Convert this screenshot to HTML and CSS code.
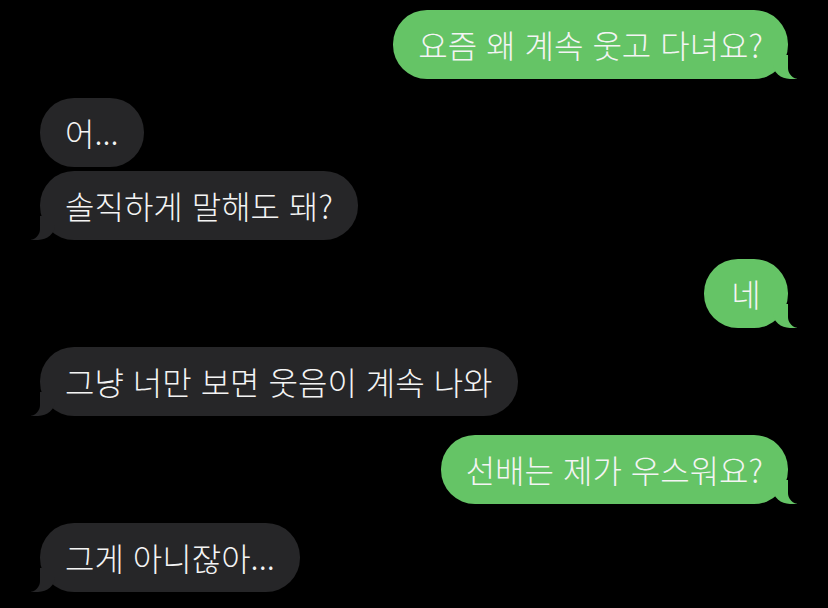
FILE: index.html
```html
<!DOCTYPE html>
<html lang="ko">
<head>
<meta charset="utf-8">
<link rel="stylesheet" href="styles.css">
</head>
<body>
<div class="chat">
  <div class="msg sent tail">요즘 왜 계속 웃고 다녀요?</div>
  <div class="msg recv first">어...</div>
  <div class="msg recv tail grouped">솔직하게 말해도 돼?</div>
  <div class="msg sent tail">네</div>
  <div class="msg recv tail">그냥 너만 보면 웃음이 계속 나와</div>
  <div class="msg sent tail">선배는 제가 우스워요?</div>
  <div class="msg recv tail">그게 아니잖아...</div>
</div>
</body>
</html>
```

FILE: styles.css
```css
html, body {
  margin: 0;
  padding: 0;
  background: #000;
}
body {
  width: 828px;
  height: 608px;
  overflow: hidden;
  font-family: "Noto Sans CJK KR", "Noto Sans", sans-serif;
}
.chat {
  display: flex;
  flex-direction: column;
  align-items: flex-start;
  padding: 10px 40px 0 40px;
  gap: 19px;
}
.msg {
  position: relative;
  box-sizing: border-box;
  height: 69px;
  min-width: 84px;
  padding: 0 25px 1px;
  display: flex;
  align-items: center;
  justify-content: center;
  font-size: 32px;
  font-weight: 300;
  line-height: 1;
  color: #f4f4f4;
  border-radius: 34px;
  white-space: nowrap;
}
.sent {
  align-self: flex-end;
  background: #65c466;
}
.recv {
  background: #262628;
}
.grouped {
  margin-top: -15px;
}
.tail.sent::before {
  content: "";
  position: absolute;
  z-index: 0;
  bottom: 0;
  right: -9px;
  width: 24px;
  height: 24px;
  background: #65c466;
  border-bottom-left-radius: 17px 15px;
}
.tail.sent::after {
  content: "";
  position: absolute;
  z-index: 1;
  bottom: 0;
  right: -11px;
  width: 11px;
  height: 24px;
  background: #000;
  border-bottom-left-radius: 11px;
}
.tail.recv::before {
  content: "";
  position: absolute;
  z-index: 0;
  bottom: 0;
  left: -9px;
  width: 24px;
  height: 24px;
  background: #262628;
  border-bottom-right-radius: 17px 15px;
}
.tail.recv::after {
  content: "";
  position: absolute;
  z-index: 1;
  bottom: 0;
  left: -11px;
  width: 11px;
  height: 24px;
  background: #000;
  border-bottom-right-radius: 11px;
}
```
